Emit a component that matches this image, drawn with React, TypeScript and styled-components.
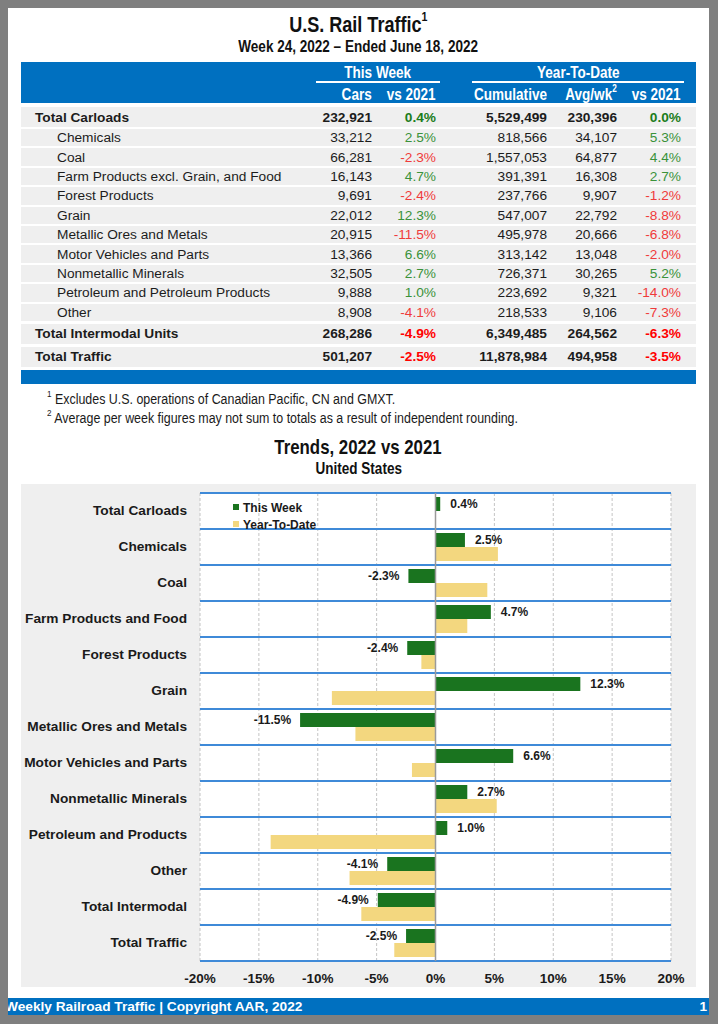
import React from 'react';
import styled, { createGlobalStyle } from 'styled-components';

const SANS = `"Liberation Sans", Arial, sans-serif`;
const BLUE = '#0070c0';

const Global = createGlobalStyle`
  html, body { margin: 0; padding: 0; background: #7f7f7f; }
  body { font-family: ${SANS}; color: #1a1a1a; }
  * { box-sizing: border-box; }
`;

/* Arial Narrow is not installed: condense Liberation Sans horizontally instead */
const Narrow = styled.span<{ $origin?: string; $sx?: number }>`
  display: inline-block;
  white-space: nowrap;
  transform: scaleX(${(p) => p.$sx ?? 0.82});
  transform-origin: ${(p) => p.$origin ?? 'center'};
`;

const Screen = styled.div`
  width: 718px;
  height: 1024px;
  padding: 8px 0 0 8px;
  overflow: hidden;
`;

const Page = styled.div`
  width: 701px;
  height: 990px;
  background: #ffffff;
  padding: 0 13px;
  display: flex;
  flex-direction: column;
  align-items: center;
`;

const Title = styled.h1`
  margin: 5px 0 0;
  font-weight: 700;
  font-size: 22px;
  line-height: 24px;
  color: #111;
`;

const Sup = styled.sup<{ $size?: number; $lift?: number }>`
  font-size: ${(p) => p.$size ?? 9}px;
  line-height: 0;
  position: relative;
  top: ${(p) => -(p.$lift ?? 1)}px;
  vertical-align: super;
`;

const Subtitle = styled.h2`
  margin: 0;
  font-weight: 700;
  font-size: 16.5px;
  line-height: 18px;
  color: #111;
`;

const COLS = '289px 62px 64px 111px 70px 64px 14px';

const TableBox = styled.div`
  align-self: stretch;
  margin-top: 7px;
  display: flex;
  flex-direction: column;
`;

const HeadGrid = styled.div`
  background: ${BLUE};
  color: #fff;
  font-weight: 700;
  font-size: 16.5px;
  display: grid;
  grid-template-columns: ${COLS};
  row-gap: 3px;
  padding: 1px 0 1px;
  margin-bottom: 4px;
`;

const Group = styled.div<{ $col: string; $ml: number; $mr: number }>`
  grid-row: 1;
  grid-column: ${(p) => p.$col};
  margin: 0 ${(p) => p.$mr}px 0 ${(p) => p.$ml}px;
  text-align: center;
  line-height: 18px;
  border-bottom: 2px solid #fff;
`;

const HeadCell = styled.div<{ $col: number }>`
  grid-row: 2;
  grid-column: ${(p) => p.$col};
  text-align: right;
  line-height: 16px;
`;

const Rows = styled.div`
  display: flex;
  flex-direction: column;
  gap: 2px;
`;

const Row = styled.div<{ $total?: boolean; $spaced?: boolean }>`
  display: grid;
  grid-template-columns: ${COLS};
  align-items: center;
  height: ${(p) => (p.$total ? 20 : 17.4)}px;
  margin-top: ${(p) => (p.$spaced ? 1 : 0)}px;
  background: #efefef;
  font-size: 13.7px;
  font-weight: ${(p) => (p.$total ? 700 : 400)};
  color: #1c1c1c;
`;

const Label = styled.div<{ $indent?: boolean }>`
  padding-left: ${(p) => (p.$indent ? 36 : 14)}px;
  white-space: nowrap;
`;

const Num = styled.div<{ $tone?: 'pos' | 'neg'; $strong?: boolean }>`
  text-align: right;
  white-space: nowrap;
  color: ${(p) =>
    p.$tone === 'pos'
      ? p.$strong
        ? '#1b7d1b'
        : '#3a923a'
      : p.$tone === 'neg'
      ? p.$strong
        ? '#ff0000'
        : '#ef3b3b'
      : 'inherit'};
`;

const BottomBar = styled.div`
  height: 14px;
  background: ${BLUE};
  margin-top: 3px;
`;

const Notes = styled.div`
  align-self: stretch;
  padding: 6px 0 0 26px;
  font-size: 13.8px;
  line-height: 19px;
  color: #1a1a1a;
`;

const Note = styled.div``;

const ChartTitle = styled.h2`
  margin: 7px 0 0;
  font-weight: 700;
  font-size: 20.5px;
  line-height: 24px;
  color: #111;
`;

const ChartSub = styled.h3`
  margin: 0;
  font-weight: 700;
  font-size: 16.5px;
  line-height: 18px;
  color: #111;
`;

const ChartBox = styled.div`
  align-self: stretch;
  margin-top: 7px;
  height: 503px;
  background: #efefef;
  display: flex;
  padding-top: 9px;
`;

const CatCol = styled.div`
  width: 179px;
  padding-right: 13px;
  display: flex;
  flex-direction: column;
`;

const Cat = styled.div`
  height: 36px;
  display: flex;
  align-items: center;
  justify-content: flex-end;
  font-weight: 700;
  font-size: 13.7px;
  white-space: nowrap;
  color: #1a1a1a;
`;

const Plot = styled.svg`
  overflow: visible;
  display: block;
`;

const PlotBg = styled.rect`
  fill: #ffffff;
`;

const GridLine = styled.line`
  stroke: #c4c4c4;
  stroke-width: 1;
  stroke-dasharray: 3 2;
`;

const ZeroLine = styled.line`
  stroke: #9a9a9a;
  stroke-width: 1.5;
`;

const RowLine = styled.line`
  stroke: #3f8ad8;
  stroke-width: 2;
`;

const Bar = styled.rect<{ $ytd?: boolean }>`
  fill: ${(p) => (p.$ytd ? '#f3d77f' : '#1a741f')};
`;

const ValueText = styled.text`
  font-family: ${SANS};
  font-weight: 700;
  font-size: 12px;
  fill: #1a1a1a;
`;

const AxisText = styled.text`
  font-family: ${SANS};
  font-weight: 700;
  font-size: 13.5px;
  fill: #1a1a1a;
`;

const LegendText = styled.text`
  font-family: ${SANS};
  font-weight: 700;
  font-size: 12px;
  fill: #1a1a1a;
`;

const Footer = styled.div`
  width: 701px;
  height: 17px;
  background: ${BLUE};
  color: #fff;
  font-weight: 700;
  font-size: 13.7px;
  display: flex;
  align-items: center;
  justify-content: space-between;
  overflow: hidden;
  white-space: nowrap;
`;

const FooterText = styled.span`
  margin-left: -3px;
`;

const PageNo = styled.span`
  padding-right: 2px;
`;

type TRow = {
  label: string;
  cars: string;
  wk: string;
  cum: string;
  avg: string;
  ytd: string;
  total?: boolean;
  spaced?: boolean;
};

const rows: TRow[] = [
  { label: 'Total Carloads', cars: '232,921', wk: '0.4%', cum: '5,529,499', avg: '230,396', ytd: '0.0%', total: true },
  { label: 'Chemicals', cars: '33,212', wk: '2.5%', cum: '818,566', avg: '34,107', ytd: '5.3%' },
  { label: 'Coal', cars: '66,281', wk: '-2.3%', cum: '1,557,053', avg: '64,877', ytd: '4.4%' },
  { label: 'Farm Products excl. Grain, and Food', cars: '16,143', wk: '4.7%', cum: '391,391', avg: '16,308', ytd: '2.7%' },
  { label: 'Forest Products', cars: '9,691', wk: '-2.4%', cum: '237,766', avg: '9,907', ytd: '-1.2%' },
  { label: 'Grain', cars: '22,012', wk: '12.3%', cum: '547,007', avg: '22,792', ytd: '-8.8%' },
  { label: 'Metallic Ores and Metals', cars: '20,915', wk: '-11.5%', cum: '495,978', avg: '20,666', ytd: '-6.8%' },
  { label: 'Motor Vehicles and Parts', cars: '13,366', wk: '6.6%', cum: '313,142', avg: '13,048', ytd: '-2.0%' },
  { label: 'Nonmetallic Minerals', cars: '32,505', wk: '2.7%', cum: '726,371', avg: '30,265', ytd: '5.2%' },
  { label: 'Petroleum and Petroleum Products', cars: '9,888', wk: '1.0%', cum: '223,692', avg: '9,321', ytd: '-14.0%' },
  { label: 'Other', cars: '8,908', wk: '-4.1%', cum: '218,533', avg: '9,106', ytd: '-7.3%' },
  { label: 'Total Intermodal Units', cars: '268,286', wk: '-4.9%', cum: '6,349,485', avg: '264,562', ytd: '-6.3%', total: true, spaced: true },
  { label: 'Total Traffic', cars: '501,207', wk: '-2.5%', cum: '11,878,984', avg: '494,958', ytd: '-3.5%', total: true, spaced: true },
];

const tone = (v: string): 'pos' | 'neg' => (v.startsWith('-') ? 'neg' : 'pos');

const chart: { name: string; wk: number; ytd: number }[] = [
  { name: 'Total Carloads', wk: 0.4, ytd: 0.0 },
  { name: 'Chemicals', wk: 2.5, ytd: 5.3 },
  { name: 'Coal', wk: -2.3, ytd: 4.4 },
  { name: 'Farm Products and Food', wk: 4.7, ytd: 2.7 },
  { name: 'Forest Products', wk: -2.4, ytd: -1.2 },
  { name: 'Grain', wk: 12.3, ytd: -8.8 },
  { name: 'Metallic Ores and Metals', wk: -11.5, ytd: -6.8 },
  { name: 'Motor Vehicles and Parts', wk: 6.6, ytd: -2.0 },
  { name: 'Nonmetallic Minerals', wk: 2.7, ytd: 5.2 },
  { name: 'Petroleum and Products', wk: 1.0, ytd: -14.0 },
  { name: 'Other', wk: -4.1, ytd: -7.3 },
  { name: 'Total Intermodal', wk: -4.9, ytd: -6.3 },
  { name: 'Total Traffic', wk: -2.5, ytd: -3.5 },
];

const PW = 471;
const PH = 468;
const SC = PW / 40;
const X0 = PW / 2;
const RH = 36;
const ticks = [-20, -15, -10, -5, 0, 5, 10, 15, 20];

function TrendChart() {
  return (
    <Plot width={494} height={494} viewBox="0 0 494 494">
      <PlotBg x={0} y={0} width={PW} height={PH} />
      {ticks
        .filter((t) => t !== 0)
        .map((t) => (
          <GridLine key={t} x1={X0 + t * SC} x2={X0 + t * SC} y1={0} y2={PH} />
        ))}
      {chart.map((_, i) => (
        <RowLine key={`l${i}`} x1={0} x2={PW} y1={i * RH} y2={i * RH} />
      ))}
      <RowLine x1={0} x2={PW} y1={PH} y2={PH} />
      {chart.map((c, i) => {
        const top = i * RH;
        const wx = c.wk >= 0 ? X0 : X0 + c.wk * SC;
        const ww = Math.abs(c.wk) * SC;
        const yx = c.ytd >= 0 ? X0 : X0 + c.ytd * SC;
        const yw = Math.abs(c.ytd) * SC;
        const label = `${c.wk.toFixed(1)}%`;
        return (
          <g key={c.name}>
            <Bar x={wx} y={top + 4} width={ww} height={14} />
            {yw > 0 && <Bar $ytd x={yx} y={top + 18} width={yw} height={14} />}
            {c.wk >= 0 ? (
              <ValueText x={X0 + ww + 10} y={top + 15}>{label}</ValueText>
            ) : (
              <ValueText x={X0 - ww - 9} y={top + 15} textAnchor="end">{label}</ValueText>
            )}
          </g>
        );
      })}
      <ZeroLine x1={X0} x2={X0} y1={0} y2={PH} />
      <rect x={33} y={11} width={6} height={6} fill="#1a741f" />
      <LegendText x={43} y={18.5}>This Week</LegendText>
      <rect x={33} y={28} width={6} height={6} fill="#f3d77f" />
      <LegendText x={43} y={35.5}>Year-To-Date</LegendText>
      {ticks.map((t) => (
        <AxisText key={`a${t}`} x={X0 + t * SC} y={490} textAnchor="middle">
          {`${t}%`}
        </AxisText>
      ))}
    </Plot>
  );
}

export default function App() {
  return (
    <>
      <Global />
      <Screen>
        <Page>
          <Title>
            <Narrow>
              U.S. Rail Traffic<Sup $size={13} $lift={3}>1</Sup>
            </Narrow>
          </Title>
          <Subtitle>
            <Narrow>Week 24, 2022 – Ended June 18, 2022</Narrow>
          </Subtitle>
          <TableBox>
            <HeadGrid>
              <Group $col="2 / 4" $ml={6} $mr={-4}>
                <Narrow>This Week</Narrow>
              </Group>
              <Group $col="4 / 7" $ml={36} $mr={-3}>
                <Narrow>Year-To-Date</Narrow>
              </Group>
              <HeadCell $col={2}>
                <Narrow $origin="right">Cars</Narrow>
              </HeadCell>
              <HeadCell $col={3}>
                <Narrow $origin="right">vs 2021</Narrow>
              </HeadCell>
              <HeadCell $col={4}>
                <Narrow $origin="right">Cumulative</Narrow>
              </HeadCell>
              <HeadCell $col={5}>
                <Narrow $origin="right">
                  Avg/wk<Sup $size={10} $lift={2}>2</Sup>
                </Narrow>
              </HeadCell>
              <HeadCell $col={6}>
                <Narrow $origin="right">vs 2021</Narrow>
              </HeadCell>
            </HeadGrid>
            <Rows>
              {rows.map((r) => (
                <Row key={r.label} $total={r.total} $spaced={r.spaced}>
                  <Label $indent={!r.total}>{r.label}</Label>
                  <Num>{r.cars}</Num>
                  <Num $tone={tone(r.wk)} $strong={r.total}>{r.wk}</Num>
                  <Num>{r.cum}</Num>
                  <Num>{r.avg}</Num>
                  <Num $tone={tone(r.ytd)} $strong={r.total}>{r.ytd}</Num>
                  <div />
                </Row>
              ))}
            </Rows>
            <BottomBar />
          </TableBox>
          <Notes>
            <Note>
              <Narrow $origin="left" $sx={0.9}>
                <Sup>1</Sup> Excludes U.S. operations of Canadian Pacific, CN and GMXT.
              </Narrow>
            </Note>
            <Note>
              <Narrow $origin="left" $sx={0.9}>
                <Sup>2</Sup> Average per week figures may not sum to totals as a result of independent rounding.
              </Narrow>
            </Note>
          </Notes>
          <ChartTitle>
            <Narrow>Trends, 2022 vs 2021</Narrow>
          </ChartTitle>
          <ChartSub>
            <Narrow>United States</Narrow>
          </ChartSub>
          <ChartBox>
            <CatCol>
              {chart.map((c) => (
                <Cat key={c.name}>{c.name}</Cat>
              ))}
            </CatCol>
            <TrendChart />
          </ChartBox>
        </Page>
        <Footer>
          <FooterText>Weekly Railroad Traffic | Copyright AAR, 2022</FooterText>
          <PageNo>1</PageNo>
        </Footer>
      </Screen>
    </>
  );
}
